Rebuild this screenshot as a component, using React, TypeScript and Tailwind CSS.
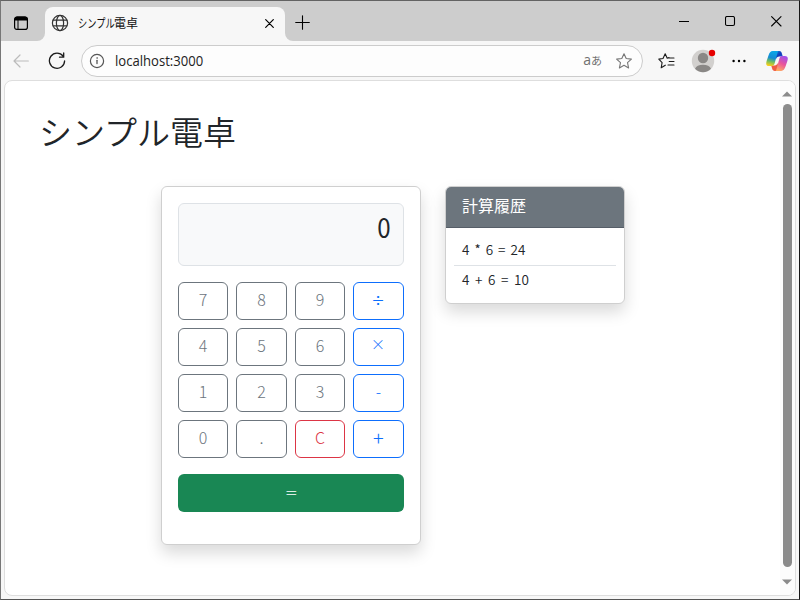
import type { ReactNode } from 'react';

const JP = "font-['Noto_Sans_CJK_JP',sans-serif]";

const GRAY = 'border-[#6c757d] text-[#6c757d]';
const BLUE = 'border-[#0d6efd] text-[#0d6efd]';
const RED = 'border-[#dc3545] text-[#dc3545]';

const keys: { label: string; tone: string; size?: string }[] = [
  { label: '7', tone: GRAY },
  { label: '8', tone: GRAY },
  { label: '9', tone: GRAY },
  { label: '÷', tone: BLUE, size: 'scale-x-[.85] scale-y-[.8] font-medium' },
  { label: '4', tone: GRAY },
  { label: '5', tone: GRAY },
  { label: '6', tone: GRAY },
  { label: '×', tone: BLUE, size: 'relative -top-px scale-[.9]' },
  { label: '1', tone: GRAY },
  { label: '2', tone: GRAY },
  { label: '3', tone: GRAY },
  { label: '-', tone: BLUE },
  { label: '0', tone: GRAY },
  { label: '.', tone: GRAY },
  { label: 'C', tone: RED },
  { label: '+', tone: BLUE, size: 'scale-[1.25]' },
];

function Icon({ w, h, className = '', children }: { w: number; h: number; className?: string; children: ReactNode }) {
  return (
    <svg width={w} height={h} viewBox={`0 0 ${w} ${h}`} fill="none" stroke="currentColor" strokeLinecap="round" strokeLinejoin="round" className={`shrink-0 ${className}`}>
      {children}
    </svg>
  );
}

function TabBar() {
  return (
    <div className="flex h-10 bg-[#cdcdcd] text-black">
      <div className="flex w-11 items-center pl-3 pt-[3px]">
        <Icon w={16} h={16}>
          <rect x="1.6" y="2" width="12.8" height="12.4" rx="2.2" strokeWidth="1.2" />
          <path d="M2 4a2 2 0 0 1 2-2h8a2 2 0 0 1 2 2v1H2z" fill="currentColor" strokeWidth="1" />
          <path d="M5 5v9" strokeWidth="1" />
        </Icon>
      </div>
      <div className="flex w-[240px] bg-[#f7f7f7]">
        <div className="-ml-2 h-10 w-2 shrink-0 bg-[#f7f7f7]">
          <div className="h-10 w-2 rounded-br-[8px] bg-[#cdcdcd]" />
        </div>
        <div className="flex grow bg-[#cdcdcd] pt-[6px]">
          <div className="flex grow items-center rounded-t-[8px] bg-[#f7f7f7] pb-[2px] pl-[6px]">
            <Icon w={18} h={18} className="text-[#333]">
              <g strokeWidth="1.2">
                <circle cx="9" cy="9" r="7.6" />
                <ellipse cx="9" cy="9" rx="3.6" ry="7.6" />
                <path d="M2.2 6.2h13.6M2.2 11.8h13.6" />
              </g>
            </Icon>
            <div className={`ml-[9px] flex w-[187px] items-center whitespace-nowrap text-[12px] leading-[18px] text-[#111] ${JP}`}>
              <span className="w-[36px] origin-left scale-x-[.77]">シンプル</span>
              <span>電卓</span>
            </div>
            <Icon w={9} h={9} className="mt-[1px]">
              <path d="M.7.7l7.6 7.6M8.3.7L.7 8.3" strokeWidth="1.2" />
            </Icon>
          </div>
        </div>
      </div>
      <div className="flex grow bg-[#f7f7f7]">
        <div className="flex grow items-center rounded-bl-[8px] bg-[#cdcdcd] pl-[10px]">
          <Icon w={15} h={15} className="mt-[3px]">
            <path d="M7.5.7v13.6M.7 7.5h13.6" strokeWidth="1.1" />
          </Icon>
          <div className="ml-auto mr-[17px] flex items-center gap-[35px] pt-[1px]">
            <Icon w={12} h={12}><path d="M1.5 5.5h9" strokeWidth="1" strokeLinecap="square" /></Icon>
            <Icon w={11} h={11}><rect x=".5" y=".5" width="9" height="9" rx="1.5" strokeWidth="1.1" /></Icon>
            <Icon w={11} h={11}><path d="M.6.6l9.4 9.4M10 .6L.6 10" strokeWidth="1.1" /></Icon>
          </div>
        </div>
      </div>
    </div>
  );
}

function Copilot() {
  return (
    <svg width="22" height="20" viewBox="0 0 22 20" className="shrink-0">
      <defs>
        <linearGradient id="cpBlue" x1=".5" y1="0" x2=".3" y2="1">
          <stop offset="0" stopColor="#0aa7e8" />
          <stop offset=".45" stopColor="#168bd3" />
          <stop offset=".7" stopColor="#72bd62" />
          <stop offset="1" stopColor="#ffcf15" />
        </linearGradient>
        <linearGradient id="cpPink" x1=".7" y1="0" x2=".3" y2="1">
          <stop offset="0" stopColor="#a04fed" />
          <stop offset=".5" stopColor="#e9559b" />
          <stop offset="1" stopColor="#ffab62" />
        </linearGradient>
        <linearGradient id="cpNavy" x1="0" y1="0" x2="1" y2="1">
          <stop offset="0" stopColor="#1687dd" />
          <stop offset=".5" stopColor="#123cba" />
          <stop offset="1" stopColor="#2459df" />
        </linearGradient>
      </defs>
      <path d="M9 0h4.2c1.5 0 2.2.9 2.6 2.2l1 3.3h-3.5c-1.6 0-2.4.8-2.9 2.4z" fill="url(#cpNavy)" />
      <path d="M13 20H8.8c-1.5 0-2.2-.9-2.6-2.2l-1-3.3h3.5c1.6 0 2.4-.8 2.9-2.4z" fill="#f05b45" />
      <path d="M12.5 0H6.8C4.6 0 3.4 1.6 2.5 4.4L.7 9.8C-.4 13.2.3 15 3.2 15h2.6c1.5 0 2.3-.9 2.8-2.4L11.2 3c.4-1.5.6-2.7 1.3-3z" fill="url(#cpBlue)" />
      <path d="M9.5 20h5.7c2.2 0 3.4-1.6 4.3-4.4l1.8-5.4c1.1-3.4.4-5.2-2.5-5.2h-2.6c-1.5 0-2.3.9-2.8 2.4L10.8 17c-.4 1.5-.6 2.7-1.3 3z" fill="url(#cpPink)" />
    </svg>
  );
}

function Toolbar() {
  return (
    <div className="flex h-[39px] items-center pt-[1px] text-[#1b1b1b]">
      <Icon w={16} h={14} className="ml-3 text-[#bbbbbb]">
        <path d="M15.3 7H1M7 1L1 7l6 6" strokeWidth="1.2" />
      </Icon>
      <Icon w={18} h={18} className="ml-[19px]">
        <path d="M15.1 4.2A7.6 7.6 0 1 0 16.6 9M15.7 1v4.2h-4.2" strokeWidth="1.3" />
      </Icon>
      <div className="ml-[15px] flex h-8 w-[562px] items-center rounded-full border border-[#cccccc] bg-[#fdfdfd] pl-[7px]">
        <Icon w={16} h={16} className="text-[#555]">
          <circle cx="8" cy="8" r="6.6" strokeWidth="1.2" />
          <path d="M8 7.3v3.2" strokeWidth="1.3" />
          <circle cx="8" cy="5" r=".35" strokeWidth=".7" />
        </Icon>
        <span className="ml-[10px] w-[90px] origin-left scale-x-[.935] whitespace-nowrap font-['Open_Sans',sans-serif] text-[14px] leading-5 text-[#222]">localhost:3000</span>
        <div className="ml-auto flex items-center text-[#707070]">
          <span className="mt-[-2px] font-['Open_Sans',sans-serif] text-[14px] leading-5">a</span>
          <span className={`mt-[-2px] mr-[14px] w-[10px] text-[11px] leading-5 ${JP}`}>あ</span>
          <Icon w={18} h={18} className="mr-[9px] text-[#777]">
            <path d="M9 1.7l2.2 4.8 5.2.6-3.9 3.5 1.1 5.3L9 13.3l-4.6 2.6 1.1-5.3L1.6 7.1l5.2-.6z" strokeWidth="1.1" />
          </Icon>
        </div>
      </div>
      <Icon w={18} h={18} className="ml-[15px]">
        <path d="M11 5.5L9.2 6.2 7.2 1.8 5 6.5l-4.2.6 3.3 3.5-.9 5.2 4.1-2.6M10.8 6h5.2M11.2 9.5H16M10 13h6" strokeWidth="1.1" />
      </Icon>
      <svg width="24" height="24" viewBox="0 0 24 24" className="ml-[15px] shrink-0 overflow-visible">
        <circle cx="12" cy="12" r="11.2" fill="#d2d0ce" />
        <circle cx="12" cy="9" r="5.2" fill="#8a8886" />
        <path d="M4 19.8c1-2.7 4-4.1 8-4.1s7 1.4 8 4.1a11.2 11.2 0 0 1-16 0z" fill="#8a8886" />
        <circle cx="21" cy="4" r="3.2" fill="#e60000" />
      </svg>
      <svg width="14" height="4" viewBox="0 0 14 4" className="ml-[17px] shrink-0">
        <circle cx="1.6" cy="2" r="1.2" /><circle cx="7" cy="2" r="1.2" /><circle cx="12.4" cy="2" r="1.2" />
      </svg>
      <div className="ml-5"><Copilot /></div>
    </div>
  );
}

function Calculator() {
  return (
    <section className="h-[359px] w-[260px] rounded-[6px] border border-[#cfcfcf] bg-white p-4 shadow-[0_8px_16px_rgba(0,0,0,0.15)]">
      <div className="flex h-[63px] justify-end rounded-[6px] border border-[#dee2e6] bg-[#f8f9fa] pr-3 pt-[5px]">
        <span className="origin-right scale-x-[.86] text-[28px] leading-[34px] text-[#212529]">0</span>
      </div>
      <div className="mt-4 grid grid-cols-[50px_51px_50px_51px] gap-2">
        {keys.map(({ label, tone, size = '' }) => (
          <button key={label} className={`flex h-[38px] items-center justify-center rounded-[6px] border pb-[4px] text-[16px] font-light leading-6 ${tone}`}>
            <span className={size}>{label}</span>
          </button>
        ))}
      </div>
      <button className="mt-4 flex h-[38px] w-full items-center justify-center rounded-[6px] bg-[#198754] pb-[3px] text-[16px] font-light text-white">
        <span className="scale-x-[1.3]">=</span>
      </button>
    </section>
  );
}

function History() {
  return (
    <section className="h-[118px] w-[180px] overflow-hidden rounded-[6px] border border-[#cfcfcf] bg-white shadow-[0_8px_16px_rgba(0,0,0,0.15)]">
      <h2 className="h-[41px] border-b border-[#565e68] bg-[#6c757d] pl-4 pt-[6px] text-[16px] font-normal leading-6 text-white">計算履歴</h2>
      <ul className="px-2 pt-2 text-[13.5px] leading-[21px] text-[#212529]">
        <li className="h-[30px] border-b border-[#dee2e6] pl-2 pt-[3px] font-[350] [word-spacing:2px]">4 * 6 = 24</li>
        <li className="h-[30px] pl-2 pt-[3px] font-[350] [word-spacing:2.6px]">4 + 6 = 10</li>
      </ul>
    </section>
  );
}

export default function App() {
  return (
    <div className="h-[600px] w-[800px] overflow-hidden border border-b-[#555] border-l-[#777] border-r-[#171717] border-t-[#636363] bg-[#f7f7f7]">
      <TabBar />
      <Toolbar />
      <div className={`ml-[3px] flex h-[516px] w-[792px] overflow-hidden rounded-[8px] border border-[#dedede] bg-white ${JP}`}>
        <main className="grow pl-[35px] pt-[26px]">
          <h1 className="-ml-[1px] whitespace-nowrap text-[33px] font-[350] leading-[48px] text-[#212529]">シンプル電卓</h1>
          <div className="ml-[121px] mt-[31px] flex items-start gap-6">
            <Calculator />
            <History />
          </div>
        </main>
        <div className="flex w-[15px] flex-col items-center bg-[#fcfcfc] pr-[1px] pt-[10px] text-[#8b8b8b]">
          <svg width="10" height="6" viewBox="0 0 10 6" fill="currentColor"><path d="M0 5.5L5 .5l5 5z" /></svg>
          <div className="mt-[7px] h-[463px] w-[9px] rounded-full bg-[#8b8b8b]" />
          <svg width="10" height="6" viewBox="0 0 10 6" fill="currentColor" className="mt-[12px]"><path d="M0 .5l5 5 5-5z" /></svg>
        </div>
      </div>
    </div>
  );
}
